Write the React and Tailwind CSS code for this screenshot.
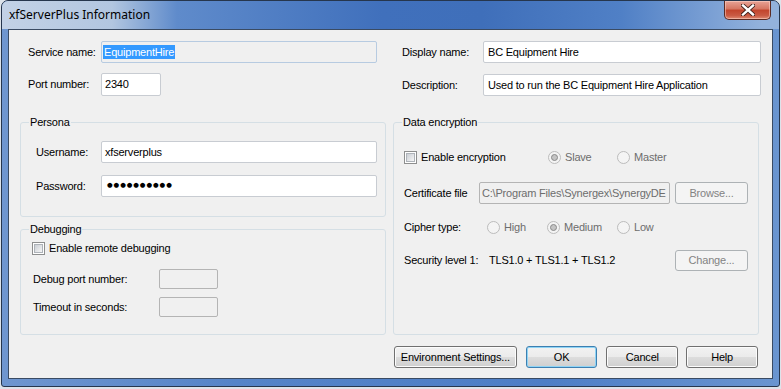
import React from "react";

const TextBox = ({ className = "", tone = "normal", children }) => {
  const tones = {
    normal: "bg-white border-[#c8ccd2]",
    readonly: "bg-[#f0f0f0] border-[#b7cbe1]",
    disabled: "bg-[#f0f0f0] border-[#b4b4b4] text-[#6d6d6d]",
  };
  return (
    <div
      className={`flex items-center border rounded-[2px] overflow-hidden whitespace-nowrap ${tones[tone]} ${className}`}
    >
      {children}
    </div>
  );
};

const Button = ({ className = "", disabled, primary, children }) => {
  let look =
    "border-[#707070] bg-[linear-gradient(#f2f2f2,#ebebeb_50%,#dddddd_50%,#cfcfcf)] shadow-[inset_0_0_0_1px_#fcfcfc] text-black";
  if (primary)
    look =
      "border-[#3c7fb1] bg-[linear-gradient(#f2f2f2,#ebebeb_50%,#dddddd_50%,#cfcfcf)] shadow-[inset_0_0_0_1px_#8fd4f5] text-black";
  if (disabled) look = "border-[#adb2b5] bg-[#f4f4f4] text-[#838383]";
  return (
    <div
      className={`flex items-center justify-center border rounded-[3px] whitespace-nowrap ${look} ${className}`}
    >
      {children}
    </div>
  );
};

const Checkbox = () => (
  <span className="block w-[13px] h-[13px] shrink-0 border border-[#8e8f8f] bg-white p-[1px]">
    <span className="block w-full h-full border border-[#aeb3b9] bg-gradient-to-br from-[#cbcfd5] to-[#f6f6f6]" />
  </span>
);

const Radio = ({ checked }) => (
  <span className="flex w-[13px] h-[13px] shrink-0 items-center justify-center rounded-full border border-[#bcbcbc] bg-[#f4f4f4]">
    {checked && (
      <span className="block w-[7px] h-[7px] rounded-full border border-[#8a8a8a] bg-[#c4c4c4]" />
    )}
  </span>
);

const Option = ({ checked, label, className = "" }) => (
  <div className={`flex items-center gap-[4px] text-[#6d6d6d] ${className}`}>
    <Radio checked={checked} />
    <span>{label}</span>
  </div>
);

const Group = ({ title, className = "", children }) => (
  <fieldset className={`border border-[#d5dfe5] rounded-[3px] ${className}`}>
    <legend className="ml-[8px] px-[1px] leading-[13px]">{title}</legend>
    {children}
  </fieldset>
);

const CloseButton = () => (
  <div className="w-[47px] h-[19px] flex items-center justify-center rounded-b-[5px] border border-t-0 border-[#5b2b24] bg-[linear-gradient(#e8a396,#d57561_45%,#c2442c_50%,#c95a43_80%,#e08a72)] shadow-[inset_0_0_0_1px_rgba(255,220,210,0.5)]">
    <svg width="14" height="12" viewBox="0 0 14 12">
      <path d="M2 1.5 L12 10.5 M12 1.5 L2 10.5" stroke="#3d1d18" strokeWidth="4.2" strokeLinecap="square" />
      <path d="M2 1.5 L12 10.5 M12 1.5 L2 10.5" stroke="#ffffff" strokeWidth="2.4" strokeLinecap="square" />
    </svg>
  </div>
);

export default function App() {
  return (
    <div className="w-[781px] h-[389px] bg-[#dde3ea] overflow-hidden">
      <div className="ml-[1px] w-[779px] h-[387px] flex flex-col rounded-t-[7px] rounded-b-[3px] border border-[#26364d] bg-[linear-gradient(90deg,#6f96cf,#5584c8_30%,#4d7ec6_70%,#6a95d0)]">
        {/* Title bar */}
        <div className="h-[28px] flex items-start justify-between pr-[8px] rounded-t-[6px] bg-[linear-gradient(90deg,#c3d2e6_0px,#b2c6e0_110px,#5f8bcb_175px,#4070bc_380px,#3f6fba_480px,#5080c6_620px,#93b2dc_760px)]">
          <div className="h-[28px] pl-[7px] flex items-center font-['Noto_Sans',sans-serif] text-[12px] text-black">
            xfServerPlus Information
          </div>
          <CloseButton />
        </div>

        {/* Client area */}
        <div className="mx-[6px] h-[350px] border border-[#3a4b63] bg-[#f0f0f0] pl-[11px] pt-[11px] flex gap-[7px] font-['Liberation_Sans',Arial,sans-serif] text-[11px] tracking-[-0.2px] text-black">
          {/* Left column */}
          <div className="w-[366px] flex flex-col">
            <div className="h-[22px] flex items-center">
              <span className="ml-[8px] w-[73px] shrink-0">Service name:</span>
              <TextBox tone="readonly" className="w-[276px] h-[22px] pl-[1px]">
                <span className="bg-[#3399ff] text-white leading-[14px] px-[1px]">EquipmentHire</span>
              </TextBox>
            </div>
            <div className="mt-[10px] h-[23px] flex items-center">
              <span className="ml-[8px] w-[73px] shrink-0">Port number:</span>
              <TextBox className="w-[60px] h-[23px] pl-[3px]">2340</TextBox>
            </div>

            <Group title="Persona" className="mt-[20px] h-[101px]">
              <div className="mt-[12px] h-[22px] flex items-center">
                <span className="ml-[15px] w-[65px] shrink-0">Username:</span>
                <TextBox className="w-[276px] h-[22px] pl-[3px]">xfserverplus</TextBox>
              </div>
              <div className="mt-[12px] h-[22px] flex items-center">
                <span className="ml-[15px] w-[65px] shrink-0">Password:</span>
                <TextBox className="w-[276px] h-[22px] pl-[5px]">
                  <span className="font-['DejaVu_Sans',sans-serif] text-[6.5px] tracking-[0.9px]">
                    ●●●●●●●●●●
                  </span>
                </TextBox>
              </div>
            </Group>

            <Group title="Debugging" className="mt-[6px] h-[112px]">
              <div className="mt-[6px] h-[13px] ml-[11px] flex items-center gap-[4px]">
                <Checkbox />
                <span>Enable remote debugging</span>
              </div>
              <div className="mt-[14px] h-[20px] flex items-center">
                <span className="ml-[12px] w-[126px] shrink-0">Debug port number:</span>
                <TextBox tone="disabled" className="w-[59px] h-[20px]" />
              </div>
              <div className="mt-[8px] h-[20px] flex items-center">
                <span className="ml-[12px] w-[126px] shrink-0">Timeout in seconds:</span>
                <TextBox tone="disabled" className="w-[59px] h-[20px]" />
              </div>
            </Group>
          </div>

          {/* Right column */}
          <div className="w-[365px] flex flex-col">
            <div className="h-[22px] flex items-center">
              <span className="ml-[9px] w-[81px] shrink-0">Display name:</span>
              <TextBox className="w-[278px] h-[22px] shrink-0 pl-[4px]">BC Equipment Hire</TextBox>
            </div>
            <div className="mt-[11px] h-[22px] flex items-center">
              <span className="ml-[9px] w-[81px] shrink-0">Description:</span>
              <TextBox className="w-[278px] h-[22px] shrink-0 pl-[4px]">
                Used to run the BC Equipment Hire Application
              </TextBox>
            </div>

            <Group title="Data encryption" className="mt-[20px] h-[219px]">
              <div className="mt-[17px] h-[22px] px-[10px] flex items-center">
                <div className="w-[144px] flex items-center gap-[4px]">
                  <Checkbox />
                  <span>Enable encryption</span>
                </div>
                <Option checked label="Slave" className="w-[69px]" />
                <Option label="Master" />
              </div>
              <div className="mt-[14px] h-[22px] px-[10px] flex items-center">
                <span className="w-[75px] shrink-0">Certificate file</span>
                <TextBox tone="disabled" className="w-[191px] h-[22px] pl-[2px]">
                  C:\Program Files\Synergex\SynergyDE
                </TextBox>
                <Button disabled className="ml-[5px] w-[73px] h-[22px]">
                  Browse...
                </Button>
              </div>
              <div className="mt-[12px] h-[22px] px-[10px] flex items-center">
                <span className="w-[83px] shrink-0">Cipher type:</span>
                <Option label="High" className="w-[60px]" />
                <Option checked label="Medium" className="w-[70px]" />
                <Option label="Low" />
              </div>
              <div className="mt-[12px] h-[21px] px-[10px] flex items-center">
                <span className="w-[85px] shrink-0">Security level 1:</span>
                <span className="flex-1">TLS1.0 + TLS1.1 + TLS1.2</span>
                <Button disabled className="w-[73px] h-[21px]">
                  Change...
                </Button>
              </div>
            </Group>

            <div className="mt-[11px] h-[22px] ml-[1px] flex items-center">
              <Button className="w-[123px] h-[22px]">Environment Settings...</Button>
              <Button primary className="ml-[9px] w-[72px] h-[22px]">
                OK
              </Button>
              <Button className="ml-[9px] w-[72px] h-[22px]">Cancel</Button>
              <Button className="ml-[8px] w-[72px] h-[22px]">Help</Button>
            </div>
          </div>
        </div>
      </div>
    </div>
  );
}
